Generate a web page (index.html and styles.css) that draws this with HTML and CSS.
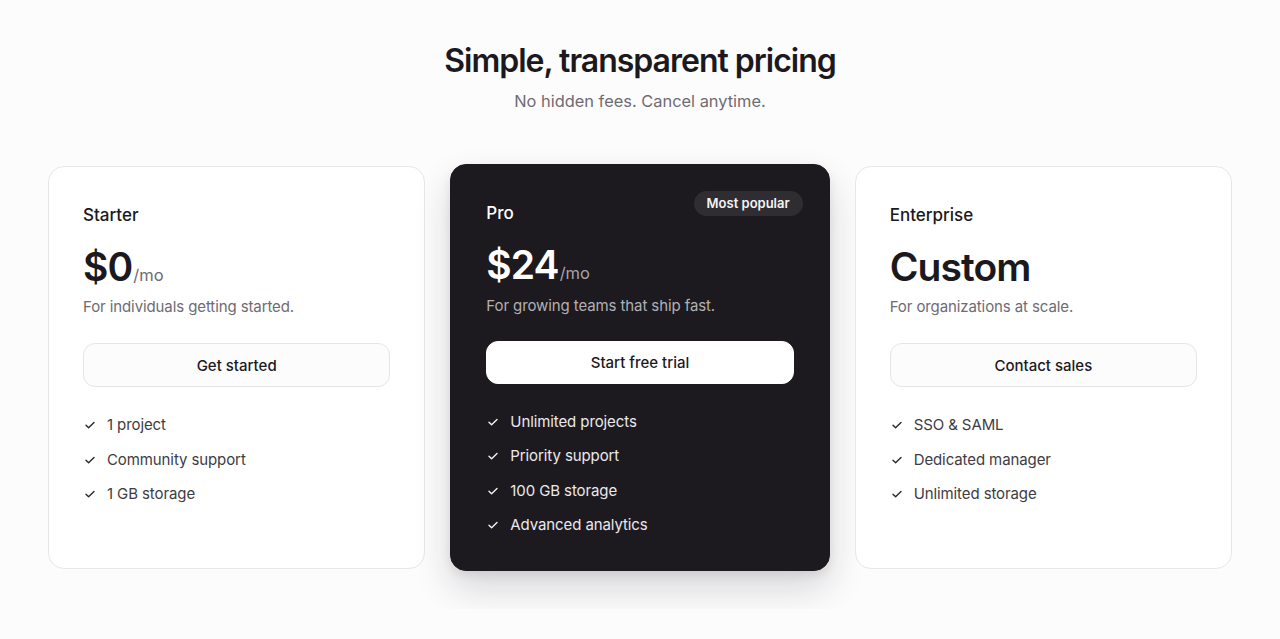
FILE: index.html
```html
<!DOCTYPE html>
<html lang="en">
<head>
<meta charset="utf-8">
<title>Pricing</title>
<link rel="stylesheet" href="styles.css">
</head>
<body>
<main class="page">
  <header class="intro">
    <h1 class="title">Simple, transparent pricing</h1>
    <p class="subtitle">No hidden fees. Cancel anytime.</p>
  </header>
  <section class="plans">
    <article class="plan">
      <h2 class="plan-name">Starter</h2>
      <div class="price"><span class="amount">$0</span><span class="per">/mo</span></div>
      <p class="desc">For individuals getting started.</p>
      <button class="cta">Get started</button>
      <ul class="features">
        <li><svg class="check" viewBox="0 0 12 12"><path d="M2 6.3 4.6 8.8 10 3.4"/></svg>1 project</li>
        <li><svg class="check" viewBox="0 0 12 12"><path d="M2 6.3 4.6 8.8 10 3.4"/></svg>Community support</li>
        <li><svg class="check" viewBox="0 0 12 12"><path d="M2 6.3 4.6 8.8 10 3.4"/></svg>1 GB storage</li>
      </ul>
    </article>
    <article class="plan plan-featured">
      <span class="badge">Most popular</span>
      <h2 class="plan-name">Pro</h2>
      <div class="price"><span class="amount">$24</span><span class="per">/mo</span></div>
      <p class="desc">For growing teams that ship fast.</p>
      <button class="cta">Start free trial</button>
      <ul class="features">
        <li><svg class="check" viewBox="0 0 12 12"><path d="M2 6.3 4.6 8.8 10 3.4"/></svg>Unlimited projects</li>
        <li><svg class="check" viewBox="0 0 12 12"><path d="M2 6.3 4.6 8.8 10 3.4"/></svg>Priority support</li>
        <li><svg class="check" viewBox="0 0 12 12"><path d="M2 6.3 4.6 8.8 10 3.4"/></svg>100 GB storage</li>
        <li><svg class="check" viewBox="0 0 12 12"><path d="M2 6.3 4.6 8.8 10 3.4"/></svg>Advanced analytics</li>
      </ul>
    </article>
    <article class="plan">
      <h2 class="plan-name">Enterprise</h2>
      <div class="price"><span class="amount">Custom</span></div>
      <p class="desc">For organizations at scale.</p>
      <button class="cta">Contact sales</button>
      <ul class="features">
        <li><svg class="check" viewBox="0 0 12 12"><path d="M2 6.3 4.6 8.8 10 3.4"/></svg>SSO &amp; SAML</li>
        <li><svg class="check" viewBox="0 0 12 12"><path d="M2 6.3 4.6 8.8 10 3.4"/></svg>Dedicated manager</li>
        <li><svg class="check" viewBox="0 0 12 12"><path d="M2 6.3 4.6 8.8 10 3.4"/></svg>Unlimited storage</li>
      </ul>
    </article>
  </section>
</main>
</body>
</html>
```
FILE: styles.css
```css
* { box-sizing: border-box; }

html, body {
  margin: 0;
  padding: 0;
  background: #fdfcfd;
  font-family: Inter, "Noto Sans", "Liberation Sans", sans-serif;
  color: #1b191d;
}

.page {
  padding: 41px 48px 40px;
}

.intro {
  text-align: center;
}

.title {
  margin: 0;
  font-size: 32px;
  line-height: 40px;
  font-weight: 600;
  letter-spacing: -1px;
  color: #1b191d;
}

.subtitle {
  margin: 8px 0 0;
  font-size: 16.4px;
  line-height: 24px;
  color: #6e6b72;
}

.plans {
  margin-top: 53px;
  display: grid;
  grid-template-columns: repeat(3, 1fr);
  gap: 26px;
  align-items: stretch;
}

.plan {
  position: relative;
  background: #ffffff;
  border: 1px solid #e8e6e9;
  border-radius: 16px;
  padding: 36px 34px 34px;
  display: flex;
  flex-direction: column;
}

.plan-featured {
  margin: -2px -1px;
  padding: 36px 35px 34px;
  background: #1c1a1e;
  border-color: #1c1a1e;
  color: #ffffff;
  box-shadow: 0 18px 36px rgba(20, 16, 24, 0.16), 0 4px 10px rgba(20, 16, 24, 0.08);
}

.badge {
  position: absolute;
  top: 26px;
  right: 26px;
  height: 25px;
  padding: 0 13px;
  border-radius: 999px;
  background: #2f2d32;
  color: #f4f3f5;
  font-size: 13px;
  font-weight: 600;
  line-height: 25px;
}

.plan-name {
  margin: 0;
  font-size: 17px;
  line-height: 24px;
  font-weight: 500;
}

.price {
  margin-top: 18px;
  display: flex;
  align-items: baseline;
}

.amount {
  font-size: 39px;
  line-height: 44px;
  font-weight: 600;
  letter-spacing: -0.9px;
}

.per {
  font-size: 16.5px;
  color: #6e6b72;
  margin-left: 1px;
}

.plan-featured .per { color: #a6a3aa; }

.desc {
  margin: 7px 0 0;
  font-size: 15px;
  line-height: 22px;
  letter-spacing: -0.1px;
  color: #6e6b72;
}

.plan-featured .desc { color: #b3b0b6; margin-top: 8px; }

.cta {
  margin-top: 25px;
  height: 44px;
  width: 100%;
  border: 1px solid #e6e4e7;
  border-radius: 12px;
  background: #fdfcfd;
  font-family: inherit;
  font-size: 15px;
  font-weight: 500;
  color: #1b191d;
}

.plan-featured .cta {
  height: 43px;
  margin-top: 24px;
  background: #ffffff;
  border-color: #ffffff;
}

.features {
  list-style: none;
  margin: 27px 0 0;
  padding: 0;
  display: flex;
  flex-direction: column;
  gap: 12.5px;
}

.plan-featured .features { gap: 12.3px; margin-top: 27px; }

.features li {
  display: flex;
  align-items: center;
  font-size: 15px;
  line-height: 22px;
  letter-spacing: -0.1px;
  color: #3e3c42;
}

.plan-featured .features li { color: #ebe9ed; }

.check {
  width: 12px;
  height: 12px;
  margin: 0 11px 0 1px;
  fill: none;
  stroke: #2a282c;
  stroke-width: 1.4;
  stroke-linecap: round;
  stroke-linejoin: round;
}

.plan-featured .check { stroke: #f2f1f3; }
```
